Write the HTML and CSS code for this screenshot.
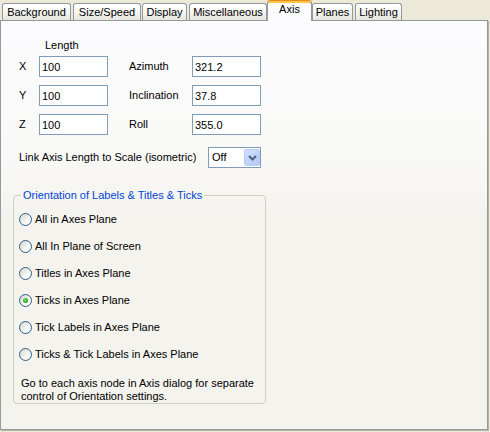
FILE: index.html
```html
<!DOCTYPE html>
<html>
<head>
<meta charset="utf-8">
<title>Axis</title>
<link rel="stylesheet" href="styles.css">
</head>
<body>
<div class="dialog">
  <div class="tabs">
    <div class="tab t-bg">Background</div>
    <div class="tab t-size">Size/Speed</div>
    <div class="tab t-disp">Display</div>
    <div class="tab t-misc">Miscellaneous</div>
    <div class="tab tab-active t-axis">Axis</div>
    <div class="tab t-planes">Planes</div>
    <div class="tab t-light">Lighting</div>
  </div>
  <div class="panel">
    <div class="length-head">Length</div>
    <div class="axis-grid">
      <span class="lbl">X</span><input class="field" value="100"><span class="lbl lbl2">Azimuth</span><input class="field" value="321.2">
      <span class="lbl">Y</span><input class="field" value="100"><span class="lbl lbl2">Inclination</span><input class="field" value="37.8">
      <span class="lbl">Z</span><input class="field" value="100"><span class="lbl lbl2">Roll</span><input class="field" value="355.0">
    </div>
    <div class="link-row">
      <span class="link-label">Link Axis Length to Scale (isometric)</span>
      <div class="combo">
        <span class="combo-text">Off</span>
        <span class="combo-btn"><svg width="9" height="6" viewBox="0 0 9 6"><path d="M1 1 L4.5 4.5 L8 1" fill="none" stroke="#4d6185" stroke-width="2"/></svg></span>
      </div>
    </div>
    <fieldset class="group">
      <legend>Orientation of Labels &amp; Titles &amp; Ticks</legend>
      <div class="radios">
        <div class="radio"><span class="dot"></span>All in Axes Plane</div>
        <div class="radio"><span class="dot"></span>All In Plane of Screen</div>
        <div class="radio"><span class="dot"></span>Titles in Axes Plane</div>
        <div class="radio"><span class="dot on"></span>Ticks in Axes Plane</div>
        <div class="radio"><span class="dot"></span>Tick Labels in Axes Plane</div>
        <div class="radio"><span class="dot"></span>Ticks &amp; Tick Labels in Axes Plane</div>
      </div>
      <p class="note">Go to each axis node in Axis dialog for separate<br>control of Orientation settings.</p>
    </fieldset>
  </div>
</div>
</body>
</html>
```
FILE: styles.css
```css
html, body {
  margin: 0;
  padding: 0;
  background: #ece9d8;
}
body {
  font-family: "Liberation Sans", Arial, sans-serif;
  font-size: 11px;
  line-height: 13px;
  color: #000;
}
.dialog {
  width: 490px;
  height: 432px;
}
.tabs {
  display: flex;
  align-items: flex-end;
  height: 20px;
}
.tab {
  box-sizing: border-box;
  height: 17px;
  border: 1px solid #919b9c;
  border-bottom: none;
  border-radius: 3px 3px 0 0;
  background: linear-gradient(#ffffff, #f3f3ef 60%, #e6e5de);
  text-align: center;
  line-height: 16px;
  white-space: nowrap;
}
.t-bg { margin-left: 2px; width: 69px; }
.t-size { margin-left: 2px; width: 68px; }
.t-disp { margin-left: 1px; width: 45px; }
.t-misc { margin-left: 2px; width: 78px; }
.t-axis { margin-left: 0; width: 45px; }
.t-planes { margin-left: 0; width: 41px; }
.t-light { margin-left: 2px; width: 47px; }
.tab-active {
  position: relative;
  z-index: 1;
  height: 21px;
  margin-bottom: -1px;
  border-top: 1px solid #e68b2c;
  background: #fcfcfe;
  box-shadow: inset 0 2px 0 #ffc73c;
  line-height: 17px;
  padding-bottom: 1px;
}
.panel {
  box-sizing: border-box;
  width: 488px;
  height: 410px;
  border: 1px solid #919b9c;
  box-shadow: 1px 1px 0 #b7b4a4;
  background: linear-gradient(#fcfcfe 0, #f9f9f8 30%, #f4f3ee 48%, #f4f3ee 100%);
  display: flex;
  flex-direction: column;
  align-items: flex-start;
}
.length-head {
  margin: 18px 0 0 44px;
}
.axis-grid {
  margin-top: 4px;
  padding-left: 18px;
  display: grid;
  grid-template-columns: 20px 69px 84px 69px;
  grid-auto-rows: 21px;
  row-gap: 8px;
  align-items: center;
}
.lbl2 {
  padding-left: 21px;
}
.field {
  box-sizing: border-box;
  width: 69px;
  height: 21px;
  margin: 0;
  border: 1px solid #7f9db9;
  padding: 0 2px;
  font-family: inherit;
  font-size: 11px;
  color: #000;
  background: #fff;
  outline: none;
}
.link-row {
  margin-top: 12px;
  padding-left: 18px;
  display: flex;
  align-items: center;
  height: 21px;
}
.link-label {
  width: 189px;
}
.combo {
  box-sizing: border-box;
  width: 53px;
  height: 21px;
  border: 1px solid #7f9db9;
  background: #fff;
  display: flex;
  align-items: center;
  padding: 1px 0 1px 3px;
}
.combo-text {
  flex: 1;
}
.combo-btn {
  box-sizing: border-box;
  width: 16px;
  height: 17px;
  border: 1px solid #bccdf3;
  border-radius: 2px;
  background: linear-gradient(135deg, #d3e0fd, #b2c7f5);
  display: flex;
  align-items: center;
  justify-content: center;
}
.group {
  box-sizing: border-box;
  width: 253px;
  margin: 21px 0 0 12px;
  padding: 11px 0 0 5px;
  border: 1px solid #d0d0bf;
  border-radius: 4px;
}
.group legend {
  margin-left: 2px;
  padding: 0 2px;
  color: #0046d5;
  line-height: 13px;
}
.radios {
  display: flex;
  flex-direction: column;
  gap: 14px;
}
.radio {
  display: flex;
  align-items: center;
  height: 13px;
  white-space: nowrap;
}
.dot {
  box-sizing: border-box;
  width: 13px;
  height: 13px;
  margin-right: 3px;
  border: 1px solid #2b5f8d;
  border-radius: 50%;
  background: linear-gradient(135deg, #d6d5cd, #f4f4f0 55%, #ffffff);
  display: flex;
  align-items: center;
  justify-content: center;
}
.dot.on::after {
  content: "";
  width: 5px;
  height: 5px;
  border-radius: 50%;
  background: radial-gradient(circle at 40% 40%, #6fe36b, #21a121 70%);
}
.note {
  margin: 16px 0 0 2px;
  line-height: 13px;
}
```
